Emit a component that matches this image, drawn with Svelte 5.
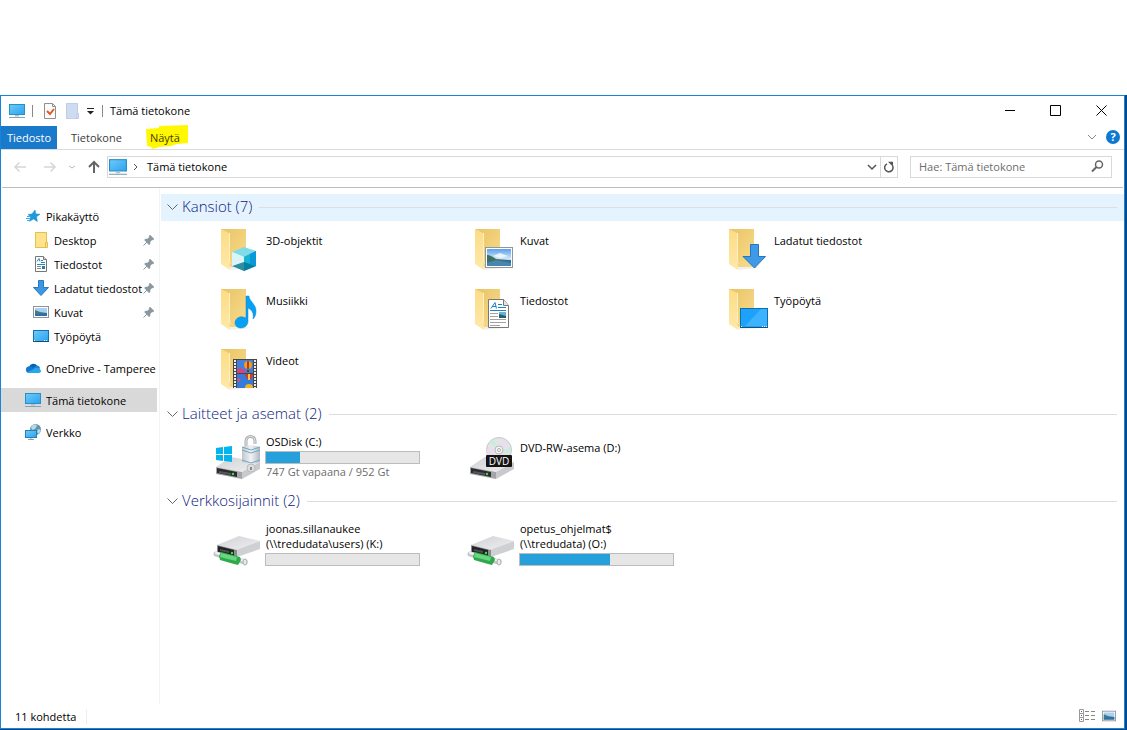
<script lang="ts">
  interface Item {
    name: string;
    icon: string;
    path?: string;
    used?: number;
    free?: string;
  }

  interface Section {
    title: string;
    open: boolean;
    hot?: boolean;
    items: Item[];
  }

  const places = [
    { name: "Pikakäyttö", icon: "star" },
    { name: "Desktop", icon: "folder", child: true, pinned: true },
    { name: "Tiedostot", icon: "doc", child: true, pinned: true },
    { name: "Ladatut tiedostot", icon: "down", child: true, pinned: true },
    { name: "Kuvat", icon: "picture", child: true, pinned: true },
    { name: "Työpöytä", icon: "desktop", child: true },
    { name: "OneDrive - Tamperee", icon: "cloud", gap: true },
    { name: "Tämä tietokone", icon: "pc", gap: true, selected: true },
    { name: "Verkko", icon: "network", gap: true },
  ];

  let sections: Section[] = $state([
    {
      title: "Kansiot",
      open: true,
      hot: true,
      items: [
        { name: "3D-objektit", icon: "cube" },
        { name: "Kuvat", icon: "picture" },
        { name: "Ladatut tiedostot", icon: "down" },
        { name: "Musiikki", icon: "music" },
        { name: "Tiedostot", icon: "doc" },
        { name: "Työpöytä", icon: "desktop" },
        { name: "Videot", icon: "video" },
      ],
    },
    {
      title: "Laitteet ja asemat",
      open: true,
      items: [
        { name: "OSDisk (C:)", icon: "osdisk", used: 22, free: "747 Gt vapaana / 952 Gt" },
        { name: "DVD-RW-asema (D:)", icon: "dvd" },
      ],
    },
    {
      title: "Verkkosijainnit",
      open: true,
      items: [
        { name: "joonas.sillanaukee", path: "(\\\\tredudata\\users) (K:)", icon: "netdrive", used: 0 },
        { name: "opetus_ohjelmat$", path: "(\\\\tredudata) (O:)", icon: "netdrive", used: 59 },
      ],
    },
  ]);

  let total = $derived(sections.reduce((sum, s) => sum + s.items.length, 0));
  let query = $state("");
</script>

{#snippet pc()}
  <rect x="0.5" y="1.5" width="15" height="10" fill="url(#screen)" stroke="#2b8fc7" />
  <path d="M6 12h4v1.500H6z" fill="#a9c3d3" />
  <path d="M0 14.500h16" stroke="#8aa3b3" />
{/snippet}

{#snippet smallPicture()}
  <rect x="0.5" y="2.500" width="15" height="11" fill="#fff" stroke="#8d9296" />
  <rect x="2" y="4" width="12" height="8" fill="#a9d0f3" />
  <path d="M2 6l5 2 7 1v3H2z" fill="#467c80" />
  <path d="M2 10l12-1v3H2z" fill="#2d6fa8" />
{/snippet}

{#snippet smallIcon(name: string)}
  <svg class="small-icon" viewBox="0 0 16 16" aria-hidden="true">
    {#if name === "star"}
      <path d="M10 2l.8 4 4.200.2-3.500 2.600.8 4.700-3.800-2.500-4 2.300 1.200-4.300L3 6.500l4-.5z" fill="#1a9be0" stroke="#1380c4" stroke-width=".5" />
      <path d="M2 8.500h3M1 10.500h4M2 12.500h3" stroke="#3eabe5" />
    {:else if name === "folder"}
      <path d="M2.500.500h11v10h1v5h-12z" fill="#ffe28c" stroke="#e5bd50" />
      <path d="M12.500 15.500v-5h2" fill="none" stroke="#e5bd50" />
    {:else if name === "doc"}
      <path d="M2.500.5h8l3 3v12h-11z" fill="#fff" stroke="#777" />
      <path d="M10.500.5v3h3" fill="#ddd" stroke="#777" />
      <path d="M4 5.500l2-3 1 3M8 4.500h2M8 6.500h4M4 8.500h8" fill="none" stroke="#2488c4" />
      <path d="M4 10.500h4M4 12.500h4" stroke="#888" />
      <path d="M9 10h3v3H9z" fill="#2f7ca0" />
    {:else if name === "down"}
      <path d="M5.500.500h5v7h5L8 15.500.500 7.500h5z" fill="#3c96e2" stroke="#2779c0" />
    {:else if name === "picture"}
      {@render smallPicture()}
    {:else if name === "desktop"}
      <rect x="0.5" y="2.500" width="15" height="11" fill="url(#screen)" stroke="#1272b5" />
      <path d="M1 12.500h2M11 12.500h4" stroke="#dff3ff" stroke-dasharray="1 1" />
      <path d="M0 13.500h16" stroke="#15506f" />
    {:else if name === "cloud"}
      <path d="M4 7a4.500 4.500 0 0 1 8.300-1L8 10z" fill="#0a62b5" />
      <path d="M3.500 13a3.400 3.400 0 0 1-.5-6.500c2-.6 4 .3 6 2.500l3 4z" fill="#1279d1" />
      <path d="M8 8l4-2.500c2 .2 3 1.500 3 3L11 10z" fill="#1489dc" />
      <path d="M2 12.500L10.500 8c3-.5 5.500 1 5.500 3 0 1.300-1 2-2.500 2H3.500z" fill="#28a8ea" />
    {:else if name === "pc"}
      {@render pc()}
    {:else if name === "network"}
      <circle cx="10.500" cy="5.500" r="5.500" fill="#5c94b3" />
      <path d="M6 3c2-3 5-3 6-1l-2 3-3 1zM13 5l3 1-2 4-2-2z" fill="#b9d9dd" />
      <rect x="0.500" y="6.500" width="11" height="7" fill="url(#screen)" stroke="#2580b8" />
      <path d="M3 15.500h6M6 14v1" stroke="#8aa3b3" />
    {/if}
  </svg>
{/snippet}

{#snippet driveBody()}
  <path d="M4 34L19 24l29 5-17 10z" fill="url(#metal)" />
  <path d="M30 39l18-10v7L30 46z" fill="#c9cacd" />
  <path d="M4 34l26 5v7L4 41z" fill="#a3a5a8" />
  <path d="M5 35l20 4v5L5 40z" fill="#292b2d" />
  <path d="M7 38l12 2v2L7 40z" fill="#55585b" />
  <circle cx="21" cy="41" r="1.200" fill="#3ee43e" />
{/snippet}

{#snippet bigIcon(name: string, folder: boolean)}
  <svg class="big-icon" viewBox="0 0 48 48" aria-hidden="true">
    {#if folder}
      <path d="M17 41l18 0 5 1-22 2z" fill="#000" opacity=".06" />
      <path d="M9 3h25v38H16z" fill="url(#folderBack)" />
      <path d="M9 3l8 4v30l1 3v3l-1 .5L9 38z" fill="url(#folderFront)" />
      <path d="M17.500 7v29l1 2" fill="none" stroke="#fff0c2" />
    {/if}
    {#if name === "cube"}
      <path d="M20 26l12-5 12 4-12 6z" fill="#7fdbe7" />
      <path d="M20 26l12 5v14l-12-5z" fill="#c5eff3" />
      <path d="M32 31l12-6v15l-12 5z" fill="#0d9ed9" />
      <path d="M20 40l12-5 12 5-12 5z" fill="#08778f" opacity=".8" />
      <path d="M20 26l12 5v5l-12 4z" fill="#d9f5f7" />
      <path d="M32 31l12-6v15l-12-4z" fill="#16b3d4" />
      <path d="M38 28l6-3v15l-6-2z" fill="#0b98d8" />
    {:else if name === "picture"}
      <rect x="19.500" y="21.500" width="27" height="20" fill="#fff" stroke="#8e979c" />
      <rect x="21" y="23" width="24" height="17" fill="url(#sky)" />
      <path d="M21 29c3 0 6 2 9 4l15 1v3H21z" fill="#3f6f5c" />
      <path d="M21 35l24-1v6H21z" fill="#32709c" />
      <path d="M21 37l9-3 15 3v3H21z" fill="#5892b8" opacity=".6" />
      <path d="M27 30l7-3 8 3-7 2z" fill="#fff" opacity=".75" />
    {:else if name === "down"}
      <path d="M30.500 18.500h8v12h7L34.500 42 23 30.500h7.500z" fill="#3f99e6" stroke="#2477bd" />
    {:else if name === "music"}
      <path d="M34 10h3c0 5 7 8 7 15 0 4-1 6-3 8 1-6-1-9-5-11v13c0 4-3 7-7 7-3 0-6-2-6-5 0-4 4-7 8-6l3 1z" fill="#08a0f2" stroke="#078bd6" stroke-width=".5" />
    {:else if name === "doc"}
      <path d="M22.500 13.500h15l5 6v22h-20z" fill="#fff" stroke="#777" />
      <path d="M37.500 13.500v6h5" fill="#e5e5e5" stroke="#777" />
      <path d="M25 22.500l4-6 1.500 6M26 20.500h4M32 18.500h4M32 21.500h8M24 24.500h16" fill="none" stroke="#1b83c4" />
      <path d="M24 27.500h8M24 30.500h8M24 33.500h16M24 36.500h16M24 39.500h10" stroke="#a2a2a2" />
      <rect x="33" y="26" width="7" height="6" fill="#6aafdd" />
      <path d="M33 28l7 2v2h-7z" fill="#285f63" />
    {:else if name === "desktop"}
      <rect x="20.500" y="22.500" width="27" height="19" fill="#1da1fa" stroke="#0b6fb4" />
      <path d="M41 23h6v17H25z" fill="#3db3ff" />
      <path d="M21 40.500h2M42 40.500h5" stroke="#e8f7ff" stroke-dasharray="1 1" />
      <path d="M20 41.500h28" stroke="#175174" />
    {:else if name === "video"}
      <rect x="21" y="13" width="24" height="29" fill="#4a4540" />
      <path d="M23 14v28M43 14v28" stroke="#eee" stroke-width="2" stroke-dasharray="2 1" />
      <rect x="25" y="14" width="16" height="13" fill="#3f80df" />
      <rect x="25" y="28" width="16" height="14" fill="#347bdc" />
      <path d="M25 25l3-4 3 3 2-1v4h-8z" fill="#dc407d" />
      <circle cx="36" cy="19" r="4" fill="#e7a01f" />
      <path d="M35 15h2v8h-2z" fill="#c93223" />
      <path d="M35 24h2v2h-2z" fill="#623d1a" />
      <path d="M33 28h8c0 3-2 4-3 6h-2c-1-2-3-3-3-6z" fill="#cf3b26" />
      <path d="M36 28h2v6h-2z" fill="#f1c939" />
      <path d="M25 33l2-1 2 2-3 2z" fill="#d65082" />
      <path d="M33 42a4 4 0 0 1 8 0z" fill="#f0b625" />
    {:else if name === "osdisk"}
      {@render driveBody()}
      <path d="M4 15l7-1v7H4zM12 14l8-1v8h-8zM4 22h7v6l-7-1zM12 22h8v7l-8-1z" fill="#04b5ed" />
      <path d="M34 15V8c0-6 9-6 9 0v3" fill="none" stroke="#a9adb1" stroke-width="3" />
      <path d="M34 15V8c0-6 9-6 9 0v3" fill="none" stroke="#e6e8ea" />
      <path d="M30 14l9-2 9 2v15l-9 3-9-3z" fill="url(#lock)" />
      <path d="M30 14l9 3 9-3M30 17l9 3 9-3M30 27l9 3 9-3" fill="none" stroke="#74a5c5" />
      <circle cx="39" cy="35" r="4" fill="#dcdee0" stroke="#b9bbbd" />
      <path d="M38 34h2v3h-2z" fill="#888" />
    {:else if name === "dvd"}
      {@render driveBody()}
      <circle cx="33" cy="17" r="12.500" fill="#e3e4e6" stroke="#c4c6c8" />
      <path d="M33 17L23 9l5-3zM33 17l12-2v6z" fill="#c7ecdf" opacity=".8" />
      <path d="M33 17l5-11 4 3zM33 17l-12 5-1-6z" fill="#efd9f2" opacity=".8" />
      <circle cx="33" cy="17" r="4" fill="#f5f5f5" stroke="#bbb" />
      <circle cx="33" cy="17" r="1.500" fill="#fff" stroke="#aaa" />
      <rect x="20" y="22" width="26" height="12" rx="1" fill="#151515" />
      <text x="33" y="32" text-anchor="middle" font-size="10" fill="#fff">DVD</text>
    {:else if name === "netdrive"}
      <path d="M5 25L27 16l21 5-23 9z" fill="url(#metal)" />
      <path d="M24 30l24-9v8L25 37z" fill="#cfd0d3" />
      <path d="M5 25l20 5v7L5 32z" fill="#8a8c8f" />
      <path d="M6 26l16 4v6L6 32z" fill="#222426" />
      <path d="M8 29l9 2v2l-9-2z" fill="#4d5053" />
      <circle cx="20" cy="33" r="1.200" fill="#3ee43e" />
      <path d="M4 34l29 8" stroke="#c3c7c9" stroke-width="5" stroke-linecap="round" />
      <path d="M4 33l29 8" stroke="#f1f3f4" stroke-width="2" stroke-linecap="round" />
      <path d="M9 32l4 1 15 4 1 3-3 5-4-1-14-4-1-4z" fill="#31a84c" />
      <path d="M9 33l16 4-1 4-16-4z" fill="#67d681" />
      <ellipse cx="33" cy="42" rx="2" ry="3" fill="#e9ebec" stroke="#a8adaf" />
    {/if}
  </svg>
{/snippet}

<svg class="defs" aria-hidden="true">
  <defs>
    <linearGradient id="screen" x1="0" y1="0" x2="1" y2="1">
      <stop offset="0" stop-color="#6ecbfa" />
      <stop offset="1" stop-color="#2ba2ef" />
    </linearGradient>
    <linearGradient id="folderBack" x1="0" y1="0" x2="1" y2="1">
      <stop offset="0" stop-color="#e9c365" />
      <stop offset="1" stop-color="#f8dc8d" />
    </linearGradient>
    <linearGradient id="folderFront" x1="0" y1="0" x2="0" y2="1">
      <stop offset="0" stop-color="#fbdc86" />
      <stop offset="1" stop-color="#ffe8a8" />
    </linearGradient>
    <linearGradient id="metal" x1="0" y1="0" x2="1" y2="1">
      <stop offset="0" stop-color="#d0d1d4" />
      <stop offset="1" stop-color="#f0f0f2" />
    </linearGradient>
    <linearGradient id="lock">
      <stop offset="0" stop-color="#c0c6cb" />
      <stop offset=".5" stop-color="#f1f3f4" />
      <stop offset="1" stop-color="#afb8c0" />
    </linearGradient>
    <linearGradient id="sky" x1="0" y1="0" x2="0" y2="1">
      <stop offset="0" stop-color="#5c9fea" />
      <stop offset=".6" stop-color="#d5eafa" />
    </linearGradient>
  </defs>
</svg>

<div class="screen">
  <div class="desktop">
    <div class="window">
      <header class="titlebar">
        <svg class="title-icon" viewBox="0 0 16 16" aria-hidden="true">{@render pc()}</svg>
        <span class="separator"></span>
        <button class="quick" aria-label="Ominaisuudet">
          <svg width="14" height="16" viewBox="0 0 14 16">
            <path d="M1.500.500h8l3 3v12h-11z" fill="#fbfbfb" stroke="#8f8f8f" />
            <path d="M9.500.500v3h3" fill="none" stroke="#8f8f8f" />
            <path d="M4 8l3 3 4-5" fill="none" stroke="#e65722" stroke-width="2" />
          </svg>
        </button>
        <button class="quick" aria-label="Uusi kansio">
          <svg width="14" height="16" viewBox="0 0 14 16">
            <path d="M1.500.500h11v10h1v5h-12z" fill="#cedcf2" stroke="#becde8" />
            <path d="M11.500 15v-4h2" fill="none" stroke="#becde8" />
          </svg>
        </button>
        <button class="quick" aria-label="Mukauta">
          <svg width="8" height="8" viewBox="0 0 8 8"><path d="M0 1.500h7" stroke="#222" /><path d="M0 4h7L3.500 7.500z" fill="#222" /></svg>
        </button>
        <span class="separator"></span>
        <h1>Tämä tietokone</h1>
        <div class="controls">
          <button aria-label="Pienennä"><svg viewBox="0 0 11 11"><path d="M1 5.500h10" /></svg></button>
          <button aria-label="Suurenna"><svg viewBox="0 0 11 11"><path d="M.5.500h10v10H.500z" /></svg></button>
          <button aria-label="Sulje"><svg viewBox="0 0 11 11"><path d="M.5.500l10 10M10.500.500l-10 10" /></svg></button>
        </div>
      </header>

      <nav class="ribbon">
        <button class="tab file">Tiedosto</button>
        <button class="tab">Tietokone</button>
        <button class="tab marked">
          <svg viewBox="0 0 42 24" aria-hidden="true"><path d="M0 4l13-1V1L42 0v18l-11 1-6 2-12 1-6 2-2-2-4-1z" fill="#fff800" /></svg>
          <span>Näytä</span>
        </button>
        <div class="ribbon-end">
          <button class="plain" aria-label="Laajenna valintanauha">
            <svg width="10" height="10" viewBox="0 0 10 10"><path d="M1 3l4 4 4-4" fill="none" stroke="#888" /></svg>
          </button>
          <button class="help" aria-label="Ohje">?</button>
        </div>
      </nav>

      <div class="address-row">
        <div class="history">
          <button class="plain" aria-label="Takaisin" disabled>
            <svg width="14" height="14" viewBox="0 0 14 14"><path d="M13 7H2M6.500 2.500L2 7l4.500 4.500" fill="none" stroke="#d6d6d6" stroke-width="1.500" /></svg>
          </button>
          <button class="plain" aria-label="Eteenpäin" disabled>
            <svg width="14" height="14" viewBox="0 0 14 14"><path d="M1 7h11M7.500 2.500L12 7l-4.500 4.500" fill="none" stroke="#d6d6d6" stroke-width="1.500" /></svg>
          </button>
          <button class="plain" aria-label="Viimeisimmät sijainnit">
            <svg width="8" height="8" viewBox="0 0 8 8"><path d="M1 3l3 2 3-2" fill="none" stroke="#bbb" /></svg>
          </button>
          <button class="plain" aria-label="Ylös">
            <svg width="14" height="14" viewBox="0 0 14 14"><path d="M7 13V2M2 7l5-5 5 5" fill="none" stroke="#666" stroke-width="2" /></svg>
          </button>
        </div>
        <div class="address">
          <svg class="address-icon" viewBox="0 0 16 16" aria-hidden="true">{@render pc()}</svg>
          <svg width="6" height="8" viewBox="0 0 6 8" aria-hidden="true"><path d="M1 1l3 3-3 3" fill="none" stroke="#555" /></svg>
          <button class="crumb">Tämä tietokone</button>
          <button class="drop" aria-label="Aiemmat sijainnit">
            <svg width="10" height="10" viewBox="0 0 10 10"><path d="M1 3l4 4 4-4" fill="none" stroke="#555" stroke-width="1.500" /></svg>
          </button>
          <button class="refresh" aria-label="Päivitä">
            <svg width="12" height="12" viewBox="0 0 12 12"><path d="M4 2.800A4.200 4.200 0 1 0 9.500 4.500" fill="none" stroke="#555" stroke-width="1.500" /><path d="M5 .8h5v5z" fill="#555" /></svg>
          </button>
        </div>
        <label class="search">
          <input type="text" placeholder="Hae: Tämä tietokone" aria-label="Hae: Tämä tietokone" bind:value={query} />
          <svg width="13" height="13" viewBox="0 0 13 13" aria-hidden="true"><circle cx="8" cy="4.500" r="3.500" fill="none" stroke="#666" stroke-width="1.500" /><path d="M5.500 7L1 11.500" stroke="#666" stroke-width="2" /></svg>
        </label>
      </div>

      <div class="body">
        <nav class="sidebar">
          {#each places as place}
            <a href="#{place.icon}" class="place" class:child={place.child} class:gap={place.gap} class:selected={place.selected}>
              {@render smallIcon(place.icon)}
              <span class="place-name">{place.name}</span>
              {#if place.pinned}
                <svg class="pin" viewBox="0 0 12 12" aria-hidden="true">
                  <path d="M7 1l4 4-1 1-1-.3L7 8l0 2-1 .8L1.500 6l1-1 2 0L6.500 3 6 2z" fill="#8b979f" stroke="#8b979f" stroke-width=".5" />
                  <path d="M4 8l-3.500 3.500" stroke="#8b979f" />
                </svg>
              {/if}
            </a>
          {/each}
        </nav>

        <main>
          {#each sections as section}
            <section>
              <h2 class:hot={section.hot}>
                <button aria-expanded={section.open} onclick={() => (section.open = !section.open)}>
                  <svg width="11" height="11" viewBox="0 0 11 11" aria-hidden="true"><path d="M.5 3.500l5 5 5-5" fill="none" stroke="#666" /></svg>
                  {section.title} ({section.items.length})
                </button>
              </h2>
              {#if section.open}
                <div class="tiles">
                  {#each section.items as item}
                    <a href="#{item.icon}" class="tile">
                      {@render bigIcon(item.icon, section.title === "Kansiot")}
                      <div class="info" class:detailed={item.used !== undefined}>
                        <span>{item.name}</span>
                        {#if item.path}
                          <span>{item.path}</span>
                        {/if}
                        {#if item.used !== undefined}
                          <div class="bar"><div class="fill" style:width="{item.used}%"></div></div>
                        {/if}
                        {#if item.free}
                          <span class="free">{item.free}</span>
                        {/if}
                      </div>
                    </a>
                  {/each}
                </div>
              {/if}
            </section>
          {/each}
        </main>
      </div>

      <footer>
        <span class="count">{total} kohdetta</span>
        <div class="views">
          <button class="plain" aria-label="Tiedot">
            <svg width="17" height="14" viewBox="0 0 17 14">
              <path d="M.5.500h4v4h-4zM.5 4.500h4v4h-4zM.5 8.500h4v4h-4z" fill="#fff" stroke="#999" />
              <path d="M2 2.500h1M2 6.500h1M2 10.500h1" stroke="#36648b" />
              <path d="M6 2.500h4M12 2.500h4M6 6.500h4M12 6.500h4M6 10.500h4M12 10.500h4" stroke="#888" />
            </svg>
          </button>
          <button class="plain" aria-label="Suuret kuvakkeet">
            <svg width="14" height="14" viewBox="0 0 16 16">{@render smallPicture()}</svg>
          </button>
        </div>
      </footer>
    </div>
  </div>
</div>

<style>
  :global(body) {
    background: #fff;
    color: #000;
    font-family: "Open Sans", "Noto Sans", sans-serif;
    font-size: 11px;
  }

  .screen {
    display: flex;
    box-sizing: border-box;
    min-height: 100vh;
    padding-top: 95px;
  }

  .desktop {
    display: flex;
    flex: 1;
    min-width: 0;
    padding: 0 2px 1px 0;
    background: #00488a;
  }

  .window {
    display: flex;
    flex: 1;
    flex-direction: column;
    min-width: 0;
    border: 1px solid #1883d7;
    background: #fff;
  }

  .defs {
    position: absolute;
    width: 0;
    height: 0;
  }

  button {
    padding: 0;
    border: 0;
    background: none;
    color: inherit;
    font: inherit;
  }

  a {
    color: inherit;
    text-decoration: none;
  }

  svg {
    display: block;
    flex: none;
  }

  .plain {
    display: flex;
    align-items: center;
  }

  .titlebar {
    display: flex;
    align-items: center;
    height: 30px;
    padding-left: 8px;
  }

  .title-icon {
    width: 16px;
    height: 16px;
    margin-right: 7px;
  }

  .separator {
    width: 1px;
    height: 12px;
    background: #888;
  }

  .quick {
    margin-left: 10px;
  }

  .quick + .quick {
    margin-left: 8px;
  }

  .quick + .separator {
    margin: 0 7px;
  }

  h1 {
    flex: 1;
    margin: 0;
    padding-bottom: 2px;
    font-size: 11px;
    font-weight: 400;
  }

  .controls {
    display: flex;
    align-self: stretch;
  }

  .controls button {
    display: grid;
    place-items: center;
    width: 46px;
    padding-bottom: 2px;
  }

  .controls svg {
    width: 11px;
    height: 11px;
    fill: none;
    stroke: #000;
  }

  .ribbon {
    display: flex;
    height: 23px;
    border-bottom: 1px solid #dadbdc;
  }

  .tab {
    padding: 0 14px;
    color: #3b3b3b;
  }

  .file {
    width: 56px;
    padding: 0;
    background: #1979ca;
    color: #fff;
  }

  .marked {
    position: relative;
    color: #4a3a00;
  }

  .marked svg {
    position: absolute;
    top: -1px;
    left: 10px;
    width: 42px;
    height: 24px;
  }

  .marked span {
    position: relative;
  }

  .ribbon-end {
    display: flex;
    align-items: center;
    gap: 9px;
    margin-left: auto;
    padding: 0 4px 2px 0;
  }

  .help {
    width: 14px;
    height: 14px;
    border-radius: 50%;
    background: #0f78d0;
    color: #fff;
    font-weight: 700;
    line-height: 14px;
  }

  .address-row {
    display: flex;
    align-items: center;
    height: 33px;
    margin: 0 1px;
    padding: 0 11px 4px;
    border-bottom: 1px solid #bdbdbd;
  }

  .history {
    display: flex;
    gap: 11px;
    margin-right: 6px;
  }

  .history button:nth-child(2) {
    margin-left: 5px;
  }

  .address {
    display: flex;
    flex: 1;
    align-items: center;
    height: 20px;
    border: 1px solid #d9d9d9;
  }

  .address-icon {
    width: 18px;
    height: 18px;
    margin: 0 6px 0 1px;
  }

  .crumb {
    flex: 1;
    margin-left: 8px;
    text-align: left;
  }

  .drop,
  .refresh {
    display: grid;
    place-items: center;
    width: 17px;
    height: 20px;
  }

  .refresh {
    border-left: 1px solid #d9d9d9;
  }

  .search {
    display: flex;
    align-items: center;
    box-sizing: border-box;
    width: 18%;
    min-width: 202px;
    height: 22px;
    margin-left: 12px;
    padding: 0 7px 0 8px;
    border: 1px solid #d9d9d9;
  }

  .search input {
    flex: 1;
    min-width: 0;
    padding: 0;
    border: 0;
    outline: 0;
    background: none;
    font: inherit;
  }

  .search input::placeholder {
    color: #6d6d6d;
  }

  .body {
    display: flex;
    flex: 1;
  }

  .sidebar {
    width: 156px;
    padding: 16px 2px 16px 0;
    border-right: 1px solid #f3f3f3;
  }

  .place {
    display: flex;
    align-items: center;
    gap: 5px;
    height: 24px;
    padding-left: 24px;
  }

  .child {
    padding-left: 32px;
    padding-right: 2px;
  }

  .gap {
    margin-top: 8px;
  }

  .selected {
    background: #d9d9d9;
  }

  .small-icon {
    width: 16px;
    height: 16px;
  }

  .place-name {
    flex: 1;
    overflow: hidden;
    white-space: nowrap;
  }

  .pin {
    width: 12px;
    height: 12px;
    margin-left: -5px;
  }

  main {
    flex: 1;
    min-width: 0;
    padding: 6px 0 0 1px;
  }

  h2 {
    display: flex;
    align-items: center;
    height: 27px;
    margin: 0;
    padding: 0 7px 0 6px;
    color: #0c2180;
    font-size: 15px;
    font-weight: 300;
  }

  h2::after {
    flex: 1;
    height: 1px;
    margin-left: 7px;
    background: #dedede;
    content: "";
  }

  h2 button {
    display: flex;
    align-items: center;
    gap: 4px;
    padding-bottom: 3px;
  }

  .hot {
    background: #e5f3ff;
  }

  .tiles {
    display: grid;
    grid-template-columns: repeat(auto-fill, 254px);
    padding-left: 51px;
  }

  .tile {
    display: flex;
    gap: 5px;
    height: 60px;
  }

  .big-icon {
    width: 48px;
    height: 48px;
    margin-top: 5px;
  }

  .info {
    display: flex;
    flex-direction: column;
    padding-top: 12px;
    line-height: 15px;
    white-space: nowrap;
  }

  .info span {
    padding-left: 1px;
  }

  .detailed {
    padding-top: 6px;
  }

  .bar {
    width: 153px;
    height: 11px;
    margin-top: 2px;
    border: 1px solid #bcbcbc;
    background: #e6e6e6;
  }

  .fill {
    height: 100%;
    background: #26a0da;
  }

  .info .free {
    color: #6d6d6d;
  }

  footer {
    display: flex;
    align-items: center;
    justify-content: space-between;
    height: 24px;
    padding: 0 8px 0 14px;
  }

  .count {
    padding-right: 10px;
    border-right: 1px solid #eee;
  }

  .views {
    display: flex;
    gap: 6px;
  }
</style>
